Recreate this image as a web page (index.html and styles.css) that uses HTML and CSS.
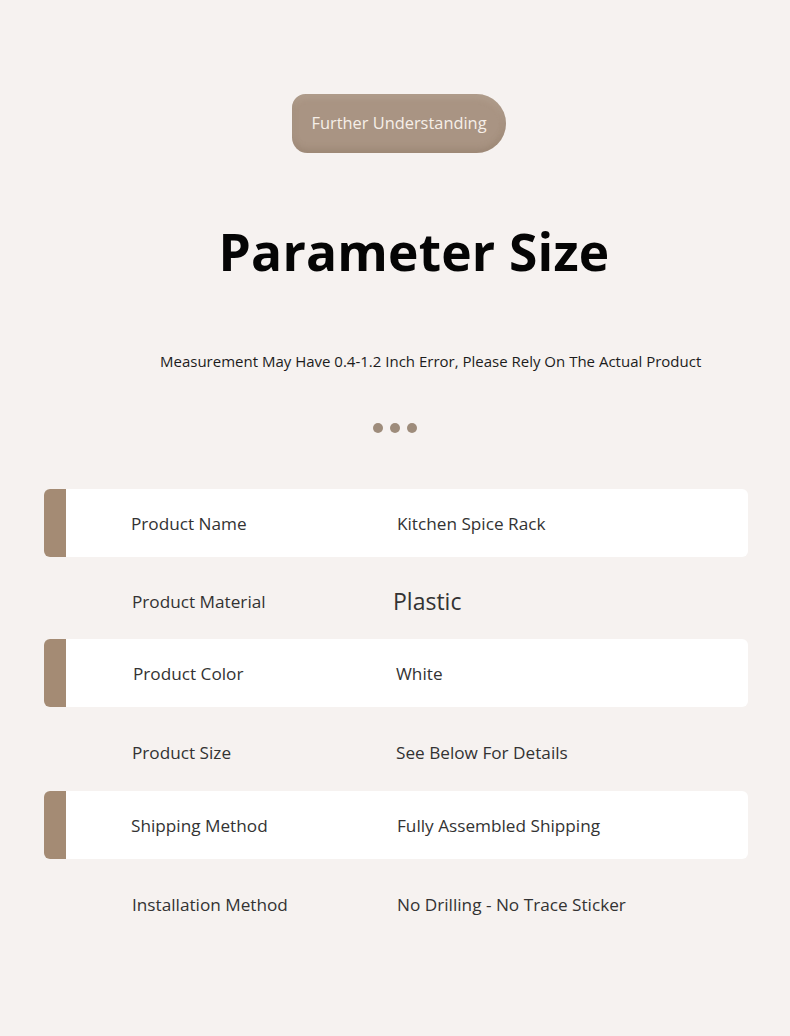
FILE: index.html
```html
<!DOCTYPE html>
<html>
<head>
<meta charset="utf-8">
<link rel="stylesheet" href="styles.css">
</head>
<body>
<main class="page">
  <div class="badge-wrap"><span class="badge">Further Understanding</span></div>
  <h1 class="title">Parameter Size</h1>
  <p class="note">Measurement May Have 0.4-1.2 Inch Error, Please Rely On The Actual Product</p>
  <div class="dots"><span></span><span></span><span></span></div>
  <div class="table">
    <div class="row card"><span class="bar"></span><span class="label">Product Name</span><span class="value">Kitchen Spice Rack</span></div>
    <div class="row plain"><span class="bar"></span><span class="label">Product Material</span><span class="value big">Plastic</span></div>
    <div class="row card"><span class="bar"></span><span class="label l2">Product Color</span><span class="value v2">White</span></div>
    <div class="row plain p4"><span class="bar"></span><span class="label">Product Size</span><span class="value v2">See Below For Details</span></div>
    <div class="row card"><span class="bar"></span><span class="label">Shipping Method</span><span class="value">Fully Assembled Shipping</span></div>
    <div class="row plain p6"><span class="bar"></span><span class="label">Installation Method</span><span class="value">No Drilling - No Trace Sticker</span></div>
  </div>
</main>
</body>
</html>
```

FILE: styles.css
```css
html, body {
  margin: 0;
  padding: 0;
  background: #f6f2f0;
}
body {
  font-family: "Open Sans", "Noto Sans", sans-serif;
  color: #333;
}
.page {
  width: 790px;
  height: 1036px;
  padding-top: 94px;
  box-sizing: border-box;
}
.badge-wrap {
  display: flex;
  justify-content: center;
  padding-left: 8px;
}
.badge {
  display: flex;
  align-items: center;
  justify-content: center;
  width: 214px;
  height: 59px;
  padding-bottom: 3px;
  box-sizing: border-box;
  background: #a99483;
  color: #f6efe8;
  font-size: 16.4px;
  border-radius: 14px 30px 30px 16px;
  box-shadow: inset 0 -4px 6px rgba(120, 100, 80, 0.25), inset 0 4px 6px rgba(200, 185, 170, 0.3);
}
.title {
  margin: 60px 0 0;
  text-align: center;
  padding-left: 38px;
  font-size: 51.5px;
  line-height: 76px;
  font-weight: 700;
  color: #050505;
  letter-spacing: 0.2px;
}
.note {
  margin: 61px 0 0;
  padding-left: 160px;
  font-size: 15px;
  line-height: 22px;
  color: #1c1c1c;
}
.dots {
  display: flex;
  justify-content: center;
  gap: 7px;
  margin-top: 51px;
}
.dots span {
  width: 10px;
  height: 10px;
  border-radius: 50%;
  background: #9e8c7b;
}
.table {
  margin: 56px 42px 0 44px;
}
.row {
  display: grid;
  grid-template-columns: 22px 331px 1fr;
  align-items: center;
  font-size: 17.2px;
  color: #333;
}
.row .label {
  padding-left: 66px;
}
.card .label {
  padding-left: 65px;
}
.card {
  height: 68px;
  background: #fff;
  border-radius: 6px;
}
.card .bar {
  align-self: stretch;
  background: #a48b74;
  border-radius: 6px 0 0 6px;
}
.plain {
  height: 82px;
}
.plain .label, .plain .value {
  margin-top: 6px;
}
.p4 { height: 84px; }
.p6 { height: 90px; }
.p6 .label, .p6 .value {
  margin-top: 0;
}
.l2 { margin-left: 2px; }
.v2 { margin-left: -1px; }
.big {
  font-size: 23px;
  margin-left: -4px;
}
.plain .big {
  margin-top: 6px;
}
```
